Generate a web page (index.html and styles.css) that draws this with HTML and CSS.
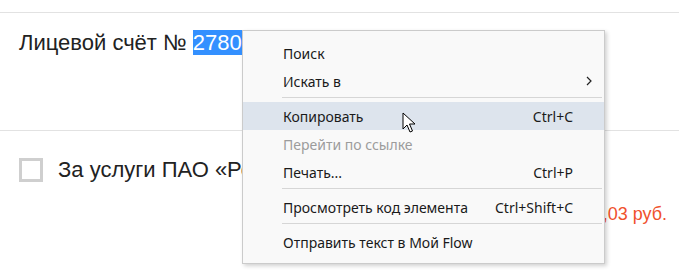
FILE: index.html
```html
<!DOCTYPE html>
<html lang="ru">
<head>
  <meta charset="UTF-8">
  <meta name="viewport" content="width=device-width, initial-scale=1.0">
  <title>Лицевой счёт</title>
  <link rel="stylesheet" href="styles.css">
</head>
<body>
  <div class="page">
    <div class="row account">
      <span class="label">Лицевой счёт № <span class="selected">278031456</span></span>
    </div>
    <div class="row service">
      <div class="service-line">
        <span class="checkbox"></span>
        <span class="label">За услуги ПАО «Ростелеком»</span>
      </div>
      <div class="amount">1 290,03 руб.</div>
    </div>

    <!-- context menu over the selection -->
    <div class="menu">
      <div class="item">Поиск</div>
      <div class="item">Искать в
        <svg class="chevron" width="6" height="10" viewBox="0 0 6 10"><path d="M1 1l4 4-4 4" fill="none" stroke="#222" stroke-width="1.2"/></svg>
      </div>
      <div class="sep"></div>
      <div class="item active">Копировать <span class="key">Ctrl+C</span></div>
      <div class="item disabled">Перейти по ссылке</div>
      <div class="item">Печать... <span class="key">Ctrl+P</span></div>
      <div class="sep"></div>
      <div class="item">Просмотреть код элемента <span class="key">Ctrl+Shift+C</span></div>
      <div class="sep"></div>
      <div class="item">Отправить текст в Мой Flow</div>
    </div>

    <svg class="cursor" width="14" height="22" viewBox="0 0 14 22">
      <path d="M1 1v16l4-4 3 7 2.5-1-3-7h5.5z" fill="#fff" stroke="#000" stroke-width="1" stroke-linejoin="round"/>
    </svg>
  </div>
</body>
</html>
```

FILE: styles.css
```css
body {
  margin: 0;
  background: #fff;
  font-family: "Liberation Sans", Arial, sans-serif;
  color: #222;
}
.page {
  position: relative;
  padding-top: 12px;
  height: 267px;
  overflow: hidden;
}
.row { border-top: 1px solid #e2e2e2; }
.row:last-of-type { border-bottom: 1px solid #e2e2e2; }
.label { font-size: 22px; line-height: 28px; white-space: nowrap; }
.account { height: 118px; padding: 16px 0 0 19px; box-sizing: border-box; }
.selected { background: #3390ff; color: #fff; }
.service { height: 130px; padding: 25px 12px 0 19px; box-sizing: border-box; }
.service-line { display: flex; align-items: center; gap: 15px; }
.checkbox {
  width: 24px;
  height: 24px;
  box-sizing: border-box;
  border: 3px solid #cfcfcf;
  flex: none;
}
.amount {
  text-align: right;
  color: #f0512d;
  font-size: 18px;
  margin-top: 20px;
}

.menu {
  position: absolute;
  left: 242px;
  top: 30px;
  width: 363px;
  box-sizing: border-box;
  padding: 8px 0 7px;
  background: #f9f9f9;
  border: 1px solid #cbcbcb;
  box-shadow: 2px 2px 4px rgba(0, 0, 0, 0.18);
  font-family: "Noto Sans", sans-serif;
  font-size: 14px;
  color: #1a1a1a;
}
.item {
  display: flex;
  align-items: center;
  justify-content: space-between;
  height: 28px;
  padding: 0 31px 0 40px;
}
.item.active { background: #dde4ed; }
.item.disabled { color: #9c9c9c; }
.chevron { margin-right: -19px; }
.sep {
  height: 1px;
  background: #d6d6d6;
  margin: 2px 2px 4px 39px;
}
.cursor { position: absolute; left: 402px; top: 112px; }
```
